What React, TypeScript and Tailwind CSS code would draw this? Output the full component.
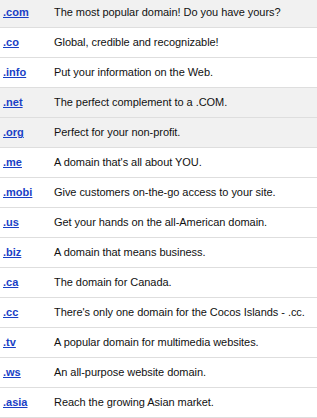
import React from 'react';

const domains = [
  { tld: '.com', text: 'The most popular domain! Do you have yours?', shaded: true },
  { tld: '.co', text: 'Global, credible and recognizable!', shaded: false },
  { tld: '.info', text: 'Put your information on the Web.', shaded: false },
  { tld: '.net', text: 'The perfect complement to a .COM.', shaded: true },
  { tld: '.org', text: 'Perfect for your non-profit.', shaded: true },
  { tld: '.me', text: "A domain that's all about YOU.", shaded: false },
  { tld: '.mobi', text: 'Give customers on-the-go access to your site.', shaded: false },
  { tld: '.us', text: 'Get your hands on the all-American domain.', shaded: false },
  { tld: '.biz', text: 'A domain that means business.', shaded: false },
  { tld: '.ca', text: 'The domain for Canada.', shaded: false },
  { tld: '.cc', text: "There's only one domain for the Cocos Islands - .cc.", shaded: false },
  { tld: '.tv', text: 'A popular domain for multimedia websites.', shaded: false },
  { tld: '.ws', text: 'An all-purpose website domain.', shaded: false },
  { tld: '.asia', text: 'Reach the growing Asian market.', shaded: false },
];

export default function App() {
  return (
    <div className="w-[317px] h-[418px] overflow-hidden bg-white font-['Liberation_Sans',Arial,sans-serif] text-[11px]">
      <div className="-mt-[2px]">
        {domains.map((d) => (
          <div
            key={d.tld}
            className={`flex items-center h-[30px] border-b border-[#dedede] ${d.shaded ? 'bg-[#f1f1f1]' : 'bg-white'}`}
          >
            <a href="#" className="w-[54px] shrink-0 pl-[3px] font-bold text-[#1a3fc6] underline">
              {d.tld}
            </a>
            <span className="text-[#111] whitespace-nowrap tracking-[-0.05px]">{d.text}</span>
          </div>
        ))}
      </div>
    </div>
  );
}
